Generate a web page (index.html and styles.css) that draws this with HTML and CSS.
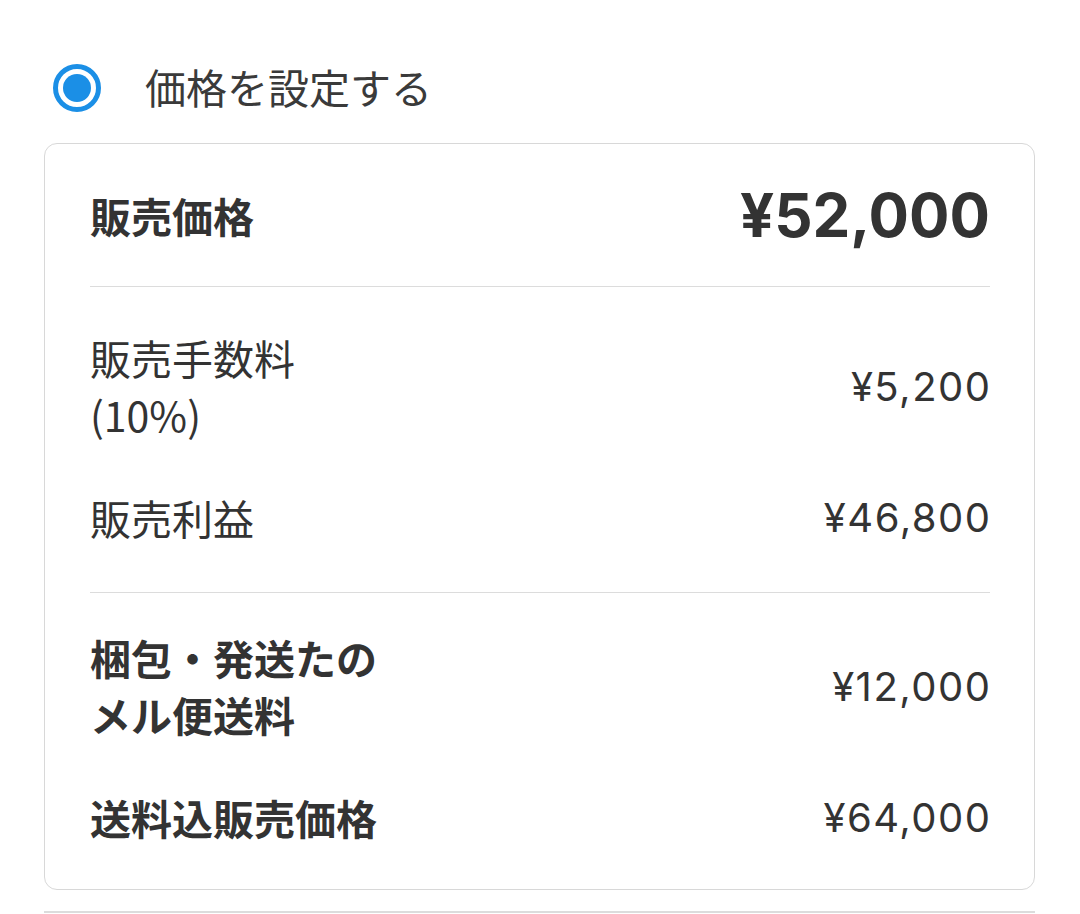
FILE: index.html
```html
<!DOCTYPE html>
<html lang="ja">
<head>
<meta charset="utf-8">
<link rel="stylesheet" href="styles.css">
</head>
<body>
<div class="page">
  <div class="radio-row">
    <span class="radio"><span class="radio-dot"></span></span>
    <span class="radio-label">価格を設定する</span>
  </div>
  <div class="card">
    <div class="section head">
      <div class="row">
        <div class="label bold">販売価格</div>
        <div class="value big">¥52,000</div>
      </div>
    </div>
    <div class="section mid">
      <div class="row">
        <div class="label">販売手数料<br>(10%)</div>
        <div class="value">¥5,200</div>
      </div>
      <div class="row">
        <div class="label">販売利益</div>
        <div class="value">¥46,800</div>
      </div>
    </div>
    <div class="section last">
      <div class="row">
        <div class="label bold">梱包・発送たの<br>メル便送料</div>
        <div class="value">¥12,000</div>
      </div>
      <div class="row">
        <div class="label bold">送料込販売価格</div>
        <div class="value">¥64,000</div>
      </div>
    </div>
  </div>
  <div class="bottom-line"></div>
</div>
</body>
</html>
```
FILE: styles.css
```css
html, body {
  margin: 0;
  padding: 0;
  background: #ffffff;
}
body {
  font-family: "Noto Sans CJK JP", "Noto Sans", sans-serif;
  color: #333333;
}
.page {
  padding: 64px 45px 0 44px;
}
.radio-row {
  display: flex;
  align-items: center;
  height: 48px;
  padding-left: 9px;
  gap: 44px;
}
.radio {
  box-sizing: border-box;
  width: 48px;
  height: 48px;
  border: 5px solid #1b8fe6;
  border-radius: 50%;
  display: flex;
  align-items: center;
  justify-content: center;
}
.radio-dot {
  width: 28px;
  height: 28px;
  border-radius: 50%;
  background: #1b8fe6;
}
.radio-label {
  font-size: 41px;
  line-height: 48px;
  color: #3a3a3a;
  margin-top: -4px;
}
.card {
  margin-top: 31px;
  border: 1.5px solid #d8d8d8;
  border-radius: 13px;
  padding: 0 44px 0 45px;
}
.section {
  padding: 42px 0;
  display: flex;
  flex-direction: column;
  gap: 44px;
}
.section.mid {
  padding-bottom: 46px;
  gap: 46px;
}
.section.last {
  padding-top: 36px;
  padding-bottom: 43px;
  gap: 46px;
}
.section + .section {
  border-top: 1.5px solid #dcdcdc;
}
.row {
  display: flex;
  justify-content: space-between;
  align-items: center;
}
.label {
  font-size: 41px;
  line-height: 57px;
  color: #333333;
}
.bold {
  font-weight: bold;
}
.value {
  font-family: "Inter", "Liberation Sans", sans-serif;
  font-size: 40px;
  letter-spacing: 1.5px;
  margin-right: -1.5px;
  line-height: 57px;
  color: #333333;
}
.big {
  font-size: 60px;
  font-weight: bold;
  letter-spacing: 0;
  margin-right: 0;
  line-height: 58px;
}
.bottom-line {
  margin-top: 21px;
  height: 2px;
  background: #dcdcdc;
}
```
